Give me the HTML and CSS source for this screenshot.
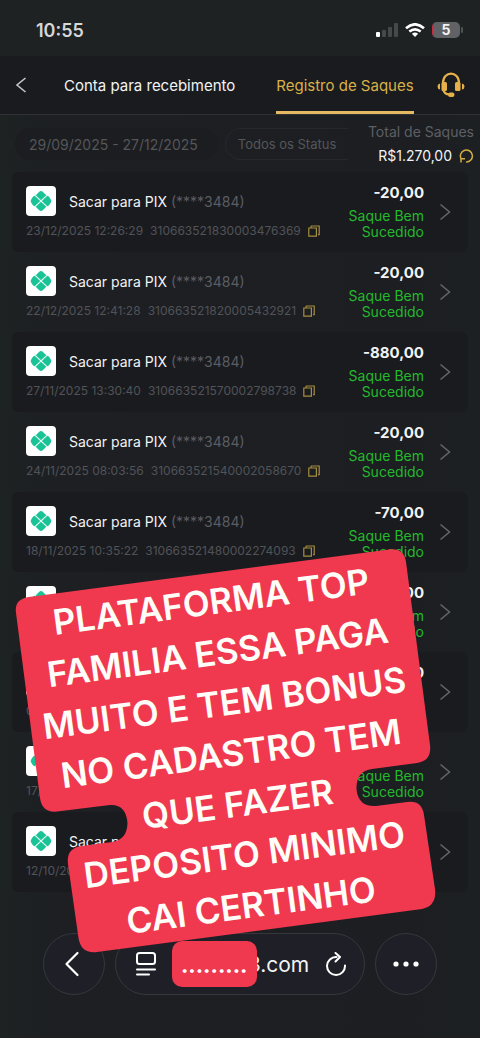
FILE: index.html
```
<!DOCTYPE html>
<html lang="pt-BR">
<head>
<meta charset="utf-8">
<meta name="viewport" content="width=device-width, initial-scale=1">
<title>Registro de Saques</title>
<link rel="stylesheet" href="styles.css">
</head>
<body>
<svg class="defs" aria-hidden="true">
  <symbol id="pix" viewBox="0 0 30 30">
    <path d="M15 5q1 0 2 1l2.500 2.500q1 1 2 1.200 1 .3 1.800 1.300l.9 1.500Q25.300 14 25.300 15t-1.100 2.500l-.9 1.500q-.8 1-1.800 1.300-1 .2-2 1.200L17 24q-1 1-2 1t-2-1l-2.500-2.500q-1-1-2-1.200-1-.3-1.800-1.300l-.9-1.500Q4.700 16 4.700 15t1.100-2.500l.9-1.500q.8-1 1.800-1.300 1-.2 2-1.200L13 6q1-1 2-1z" fill="#19c395"/>
    <path d="M8.500 8.800 15 15l6.500-6.200M8.500 21.200 15 15l6.500 6.200" fill="none" stroke="#e9fbf5" stroke-width="1.100"/>
  </symbol>
  <symbol id="copy" viewBox="0 0 12 12">
    <path d="M.8 3h7.600v8.200H.8zM3 1h8.200v8.600H10M3 1v1.500" fill="none" stroke="#a58d3f" stroke-width="1.200"/>
  </symbol>
  <symbol id="chevron" viewBox="0 0 12 18">
    <path d="M1.500 1.500 10.500 9l-9 7.500" fill="none" stroke="#66676b" stroke-width="1.500"/>
  </symbol>
</svg>
<div class="screen">
  <div class="statusbar">
    <span class="clock">10:55</span>
    <div class="indicators">
      <svg width="22" height="14" viewBox="0 0 22 14"><rect x="0" y="9" width="4" height="5" rx="1" fill="#fff"/><g fill="#46494b"><rect x="6" y="7" width="4" height="7" rx="1"/><rect x="12" y="4" width="4" height="10" rx="1"/><rect x="18" y="0" width="4" height="14" rx="1"/></g></svg>
      <svg class="wifi" width="20" height="14" viewBox="0 0 20 14"><g fill="none" stroke="#fff" stroke-width="2.600"><path d="M1 5.200Q10-2.600 19 5.200"/><path d="M4.300 8.600q5.700-4.600 11.400 0"/></g><path d="M6.900 10.700q3.100-2.400 6.200 0L10 14z" fill="#fff"/></svg>
      <span class="battery">5</span>
    </div>
  </div>
  <header class="tabs">
    <button class="back" aria-label="Voltar"><svg width="12" height="18" viewBox="0 0 12 18"><path d="M10.500 2 2 9l8.500 7" fill="none" stroke="#c4c5c7" stroke-width="1.600"/></svg></button>
    <button class="tab">Conta para recebimento</button>
    <button class="tab active">Registro de Saques</button>
    <button class="support" aria-label="Suporte"><svg width="28" height="26" viewBox="0 0 28 26"><g fill="#e5b148"><rect x="4.500" y="10" width="5.500" height="9" rx="1.500"/><rect x="18" y="10" width="5.500" height="9" rx="1.500"/><path d="M3 11.500v6Q.5 17 .5 14.500t2.500-3zM25 11.500v6q2.500-.5 2.500-3t-2.500-3z"/><rect x="11" y="20.500" width="6.500" height="4.500" rx="2.200"/></g><path d="M6 11C6-1.500 22-1.500 22 11M6.500 18q.5 4 6 4.500" fill="none" stroke="#e5b148" stroke-width="2.200"/></svg></button>
  </header>
  <section class="filters">
    <button class="pill dates">29/09/2025 - 27/12/2025</button>
    <button class="pill status-filter">Todos os Status</button>
    <div class="total">
      <span class="total-label">Total de Saques</span>
      <span class="total-value">R$1.270,00
        <button class="refresh" aria-label="Atualizar"><svg width="15" height="14" viewBox="0 0 15 14"><path d="M2.500 10.500A6 6 0 1 1 7 13M2 13.500V9.800h4" fill="none" stroke="#d2ad43" stroke-width="1.500"/></svg></button></span>
    </div>
  </section>
  <ul class="list" id="list"></ul>
  <nav class="browser">
    <button class="round" aria-label="Página anterior"><svg width="16" height="26" viewBox="0 0 16 26"><path d="M13.500 2 2.500 13l11 11" fill="none" stroke="#fff" stroke-width="2.200" stroke-linecap="round" stroke-linejoin="round"/></svg></button>
    <div class="address">
      <button class="plain" aria-label="Leitor"><svg width="20" height="24" viewBox="0 0 20 24"><g fill="none" stroke="#fff" stroke-width="2" stroke-linecap="round"><rect x="1" y="1" width="18" height="11" rx="2.500"/><path d="M1 17.500h18M1 22.500h12"/></g></svg></button>
      <span class="url"><span class="mask">.........</span><span class="domain">3.com</span></span>
      <button class="plain" aria-label="Recarregar"><svg width="22" height="24" viewBox="0 0 22 24"><path d="M11.500 5A9 9 0 1 0 20 13.500M10.500 1l4.500 4-4.500 4.500" fill="none" stroke="#fff" stroke-width="2" stroke-linecap="round" stroke-linejoin="round"/></svg></button>
    </div>
    <button class="round" aria-label="Mais"><svg width="26" height="6" viewBox="0 0 26 6" fill="#fff"><circle cx="3" cy="3" r="2.600"/><circle cx="13" cy="3" r="2.600"/><circle cx="23" cy="3" r="2.600"/></svg></button>
  </nav>
  <div class="sticker">
    <svg class="sticker-shape" width="424" height="408" viewBox="14 547 424 408"><path fill="#f0384f" d="M29 597 389 549.500Q404 547.500 406 562L430 745Q432 761 417 763L372 769Q356 771 356.500 789 358 807 376 806L407 802Q422 800 424 815L435 889Q437 906 422 909L97 952Q81 954 78.500 938L68 864Q66 848 82 846L112 842Q127 840 127.500 823 126 804 110 805L57 811.500Q42 813 40 798L16 613Q14 599 29 597Z"/></svg>
    <p class="sticker-text">PLATAFORMA TOP<br>FAMILIA ESSA PAGA<br>MUITO E TEM BONUS<br>NO CADASTRO TEM<br>QUE FAZER<br>DEPOSITO MINIMO<br>CAI CERTINHO</p>
  </div>
</div>
<script src="app.js"></script>
</body>
</html>
```
FILE: styles.css
```
* { box-sizing: border-box; }
body {
  margin: 0;
  background: #1d2122;
  color: #f2f3f4;
  font-family: Inter, "Liberation Sans", sans-serif;
}
button { border: 0; padding: 0; background: none; color: inherit; font: inherit; }
svg { display: block; flex: none; }
.defs { position: absolute; width: 0; height: 0; }
.screen { position: relative; overflow: hidden; background: linear-gradient(90deg, #1d2222, #1d1f23 12%, #1c1e22 85%, #1d2023); }

.statusbar {
  display: flex;
  align-items: center;
  justify-content: space-between;
  height: 56px;
  padding: 4px 20px 0 36px;
  background: #1e2223;
}
.clock { font-size: 18px; font-weight: 600; color: #d5d7d8; }
.indicators { display: flex; align-items: center; gap: 7px; }
.battery {
  position: relative;
  width: 28px;
  height: 16px;
  border-radius: 5px;
  background: linear-gradient(90deg, #c92d46 2px, #606265 2px);
  font-size: 14px;
  font-weight: 700;
  line-height: 16px;
  text-align: center;
}
.battery::after {
  content: "";
  position: absolute;
  left: 29px;
  top: 5px;
  width: 2px;
  height: 6px;
  border-radius: 1px;
  background: #505356;
}

.tabs {
  display: flex;
  height: 59px;
  padding: 0 15px;
  border-bottom: 1px solid #303137;
  background: #1a1b1f;
  font-size: 15px;
}
.tab { border-bottom: 3px solid transparent; padding-top: 3px; white-space: nowrap; }
.tab.active { margin-left: 41px; border-color: #e5b862; color: #d8b148; }
.back { width: 12px; margin-right: 37px; }
.support { margin-left: auto; }

.filters { display: flex; align-items: center; gap: 7px; padding: 8px 6px 7px 15px; }
.pill { height: 32px; border-radius: 16px; color: #54565a; white-space: nowrap; }
.dates { flex: none; padding: 0 20px 0 14px; background: #1b1d20; font-size: 14px; }
.status-filter { flex: none; padding: 0 12px; border: 1px solid #26282d; border-right: 0; border-radius: 16px 0 0 16px; font-size: 13px; }
.total { display: flex; flex-direction: column; align-items: flex-end; gap: 6px; margin-left: auto; white-space: nowrap; line-height: 18px; }
.total-label { color: #5d5f64; font-size: 14px; }
.total-value { display: flex; align-items: center; gap: 7px; font-size: 14px; }

.list { margin: 0 12px; padding: 0; list-style: none; }
.row { display: flex; height: 80px; padding: 11px 17px 13px 14px; border-radius: 6px; }
.row:nth-child(odd) { background: #1a1b1f; }
.info { flex: 1; min-width: 0; padding-top: 3px; }
.title { display: flex; align-items: center; gap: 13px; font-size: 14px; white-space: nowrap; }
.logo { width: 30px; height: 30px; border-radius: 4px; background: #fff; }
.account { color: #5c5d62; }
.meta { display: flex; align-items: center; gap: 7px; margin-top: 7px; color: #515358; font-size: 12px; line-height: 16px; white-space: nowrap; }
.copy svg { width: 12px; height: 12px; }
.result { width: 90px; text-align: right; }
.amount { display: block; margin-bottom: 5px; font-size: 15px; font-weight: 700; line-height: 20px; }
.state { display: block; color: #24b92c; font-size: 14px; line-height: 16px; }
.go { align-self: center; margin: 2px 0 0 15px; }
.go svg { width: 12px; height: 18px; }

.browser { display: flex; justify-content: center; gap: 10px; padding: 41px 43px 43px; }
.round, .address { height: 62px; border: 1px solid #35373c; border-radius: 31px; background: #1f2027; }
.round { display: flex; align-items: center; justify-content: center; flex: none; width: 62px; }
.round:first-child { padding-right: 4px; }
.address { display: flex; align-items: center; justify-content: space-between; flex: 1; padding: 0 17px 0 20px; }
.plain { flex: none; }
.url { display: flex; align-items: center; font-size: 21px; }
.mask {
  z-index: 1;
  width: 85px;
  height: 46px;
  border-radius: 10px;
  background: #f0384f;
  color: #fff;
  font-size: 21px;
  font-weight: 800;
  line-height: 50px;
  text-align: center;
}
.domain { margin-left: -9px; }

.sticker { position: absolute; left: 14px; top: 547px; width: 424px; }
.sticker-text {
  position: absolute;
  left: 5px;
  top: 28px;
  width: 424px;
  margin: 0;
  color: #fffdf8;
  font-size: 35px;
  font-weight: 600;
  line-height: 51px;
  text-align: center;
  white-space: nowrap;
  transform: rotate(-7.5deg);
}
```
FILE: app.js
```
const rows = [
  ["23/12/2025 12:26:29", "310663521830003476369", "-20,00"],
  ["22/12/2025 12:41:28", "310663521820005432921", "-20,00"],
  ["27/11/2025 13:30:40", "310663521570002798738", "-880,00"],
  ["24/11/2025 08:03:56", "310663521540002058670", "-20,00"],
  ["18/11/2025 10:35:22", "310663521480002274093", "-70,00"],
  ["", "", "-20,00"],
  ["0", "", "-20,00"],
  ["17/", "", ""],
  ["12/10/2025", "", ""]
];
document.getElementById("list").innerHTML = rows.map(([date, code, amount], i) => `
  <li class="row">
    <div class="info">
      <div class="title"><svg class="logo"><use href="#pix"/></svg>
        ${i < 5 || i === 8 ? `<span>Sacar para PIX ${code ? '<span class="account">(****3484)</span>' : ""}</span>` : ""}</div>
      <div class="meta"><span>${date}</span>${code ? `<span>${code}</span><button class="copy" aria-label="Copiar"><svg><use href="#copy"/></svg></button>` : ""}</div>
    </div>
    <div class="result"><span class="amount">${amount || "&nbsp;"}</span>${i < 8 ? '<span class="state">Saque Bem Sucedido</span>' : ""}</div>
    <button class="go" aria-label="Detalhes"><svg><use href="#chevron"/></svg></button>
  </li>`).join("");
```
